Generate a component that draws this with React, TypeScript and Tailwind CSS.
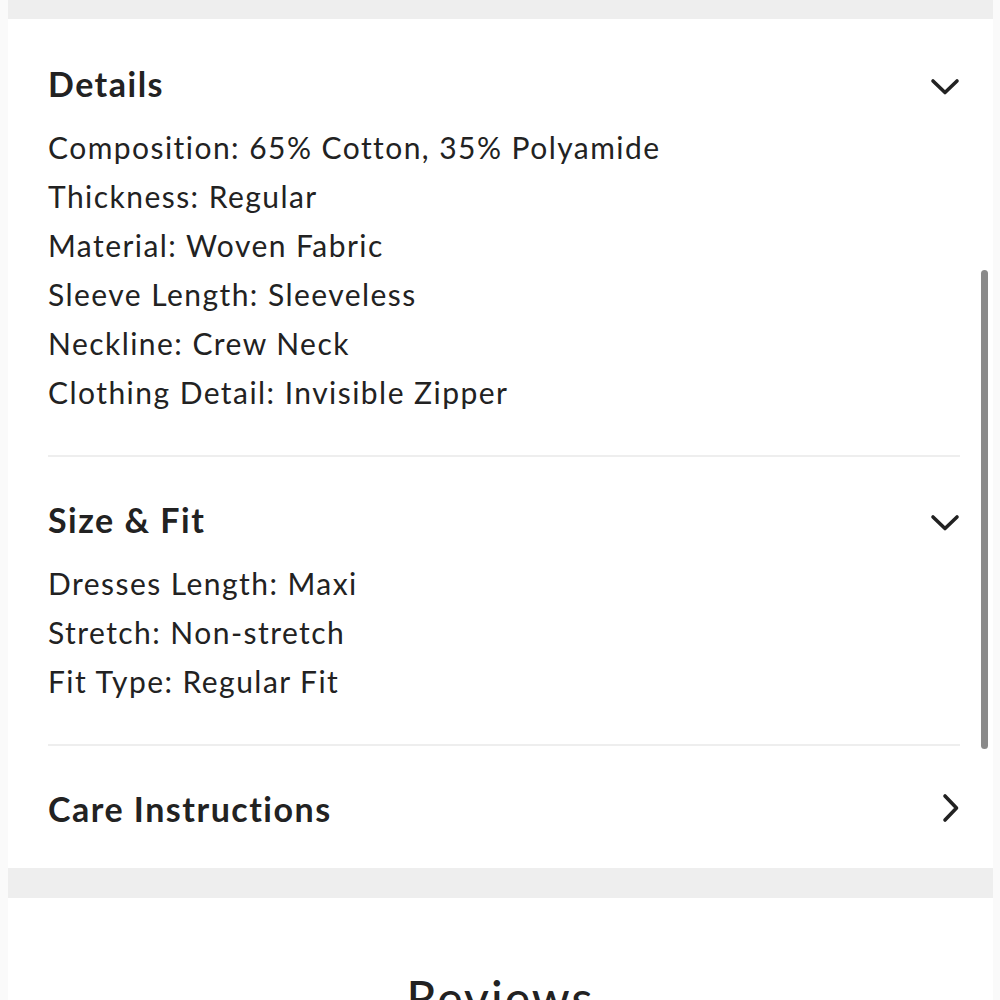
import React from 'react'

const font = { fontFamily: 'Lato, "Noto Sans", sans-serif' }

function ChevronDown() {
  return (
    <svg width="30" height="18" viewBox="0 0 30 18" fill="none" className="mt-2">
      <path d="M3 3 L15 14.5 L27 3" stroke="#222" strokeWidth="3.6" strokeLinecap="round" strokeLinejoin="round" />
    </svg>
  )
}

function ChevronRight() {
  return (
    <svg width="18" height="30" viewBox="0 0 18 30" fill="none">
      <path d="M3 3 L14.5 15 L3 27" stroke="#222" strokeWidth="3.6" strokeLinecap="round" strokeLinejoin="round" />
    </svg>
  )
}

type Section = { title: string; lines: string[]; open: boolean }

const sections: Section[] = [
  {
    title: 'Details',
    open: true,
    lines: [
      'Composition: 65% Cotton, 35% Polyamide',
      'Thickness: Regular',
      'Material: Woven Fabric',
      'Sleeve Length: Sleeveless',
      'Neckline: Crew Neck',
      'Clothing Detail: Invisible Zipper',
    ],
  },
  {
    title: 'Size & Fit',
    open: true,
    lines: ['Dresses Length: Maxi', 'Stretch: Non-stretch', 'Fit Type: Regular Fit'],
  },
  { title: 'Care Instructions', open: false, lines: [] },
]

export default function App() {
  return (
    <div className="flex h-[1000px] w-[1000px] overflow-hidden bg-[#fafafa] text-[#222]" style={font}>
      <div className="ml-2 flex w-[985px] flex-col">
        <div className="h-[19px] shrink-0 bg-[#eeeeee]" />
        <div className="relative shrink-0 bg-white pl-10 pr-[33px]">
          {sections.map((s, i) => (
            <div key={s.title} className={i < sections.length - 1 ? 'border-b-2 border-[#eeeeee]' : ''}>
              <div className={`${i === 0 ? 'pt-10' : 'pt-[38px]'} ${i < sections.length - 1 ? 'pb-[38px]' : 'pb-9'}`}>
                <div className="flex h-12 items-center justify-between">
                  <h2 className="text-[34px] font-bold tracking-[1.5px]">{s.title}</h2>
                  {s.open ? <ChevronDown /> : <ChevronRight />}
                </div>
                {s.lines.length > 0 && (
                  <ul className="mt-[16px]">
                    {s.lines.map((l) => (
                      <li key={l} className="text-[30px] leading-[49px] tracking-[1.45px]">
                        {l}
                      </li>
                    ))}
                  </ul>
                )}
              </div>
            </div>
          ))}
          <div className="absolute right-[5px] top-[251px] h-[479px] w-[7px] rounded-full bg-[#8a8a8a]" />
        </div>
        <div className="h-[30px] shrink-0 bg-[#eeeeee]" />
        <div className="flex-1 bg-white pt-[64px] text-center">
          <h2 className="text-[48px] font-medium tracking-[2px]">Reviews</h2>
        </div>
      </div>
    </div>
  )
}
